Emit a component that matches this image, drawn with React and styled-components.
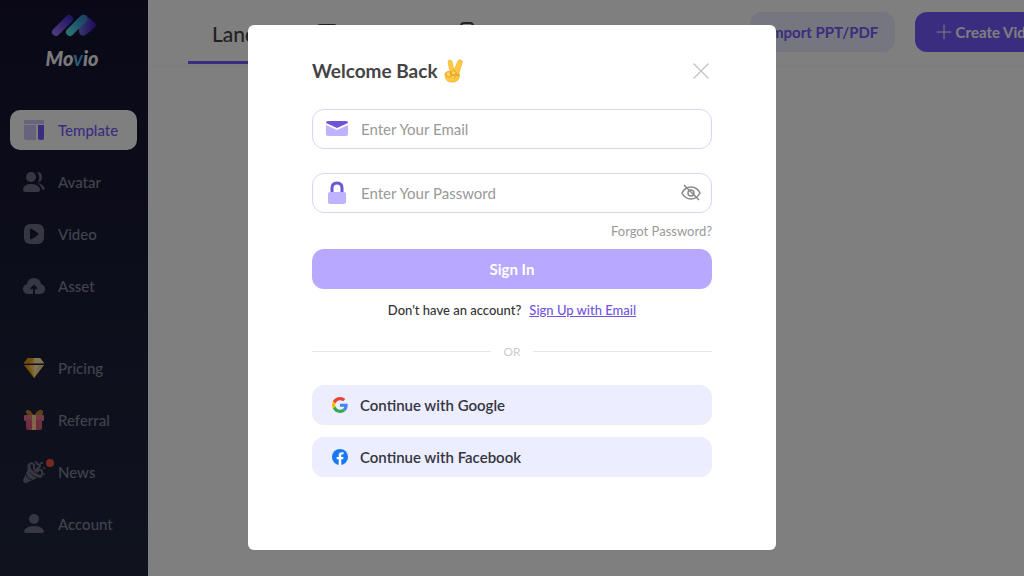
import React, { useState } from 'react';
import styled, { createGlobalStyle } from 'styled-components';

const GlobalStyle = createGlobalStyle`
  * {
    box-sizing: border-box;
  }
  body {
    margin: 0;
    overflow: hidden;
    background: #fff;
    font-family: Lato, 'Open Sans', 'Liberation Sans', sans-serif;
  }
  button, input {
    font-family: inherit;
  }
`;

const Page = styled.div`
  display: flex;
  min-width: 1063px;
  min-height: 100vh;
`;

const Sidebar = styled.aside`
  flex: 0 0 148px;
  padding: 12px 10px 0;
  background: linear-gradient(#14112e, #20283e);
`;

const Logo = styled.div`
  display: flex;
  flex-direction: column;
  align-items: center;
  height: 98px;
`;

const LogoText = styled.span`
  margin-top: 8px;
  padding-right: 4px;
  color: #f4f4f8;
  font-size: 20px;
  line-height: 24px;
  font-weight: 900;
  font-style: italic;
  i {
    color: transparent;
    background: linear-gradient(to top right, #55ddec, #3b7fd0);
    background-clip: text;
  }
`;

const Menu = styled.nav`
  display: flex;
  flex-direction: column;
  gap: 12px;
  margin-bottom: 42px;
`;

const MenuItem = styled.a`
  display: flex;
  align-items: center;
  gap: 12px;
  width: 127px;
  height: 40px;
  padding-left: 12px;
  border-radius: 10px;
  color: ${(props) => (props.$active ? '#7559ff' : '#84859a')};
  background: ${(props) => (props.$active ? '#fff' : 'transparent')};
  font-size: 15px;
  font-weight: 500;
  text-decoration: none;
`;

const IconBox = styled.span`
  position: relative;
  display: flex;
  width: 24px;
  height: 24px;
`;

const Dot = styled.span`
  position: absolute;
  top: -1px;
  right: -8px;
  width: 8px;
  height: 8px;
  border-radius: 50%;
  background: #f0503f;
`;

const Main = styled.main`
  flex: 1;
  min-width: 0;
`;

const Header = styled.header`
  display: flex;
  align-items: flex-start;
  height: 67px;
  padding: 12px 0 0 40px;
  border-bottom: 1px solid #f6f6f8;
`;

const Tabs = styled.div`
  display: flex;
  flex: 1;
`;

const Tab = styled.button`
  display: flex;
  align-items: center;
  gap: 8px;
  height: 52px;
  padding: 0 20px 7px 24px;
  border: 0;
  border-bottom: 3px solid ${(props) => (props.$active ? '#7559ff' : 'transparent')};
  background: none;
  color: #444;
  font-size: 21px;
  font-weight: 500;
`;

const HeaderButton = styled.button`
  display: flex;
  flex-shrink: 0;
  align-items: center;
  justify-content: center;
  gap: 4px;
  width: ${(props) => (props.$primary ? '148px' : '145px')};
  height: 40px;
  margin-left: 20px;
  border: 0;
  border-radius: 12px;
  color: ${(props) => (props.$primary ? '#fff' : '#7559ff')};
  background: ${(props) => (props.$primary ? '#7559ff' : '#ecedff')};
  font-size: 15px;
  font-weight: 700;
  white-space: nowrap;
`;

const Overlay = styled.div`
  position: fixed;
  inset: 0;
  display: flex;
  align-items: center;
  justify-content: center;
  padding-bottom: 2px;
  background: rgba(0, 0, 0, 0.5);
`;

const Modal = styled.section`
  width: 528px;
  max-width: 100%;
  min-height: 525px;
  padding: 32px 64px;
  border-radius: 6px;
  background: #fff;
`;

const ModalHeader = styled.div`
  display: flex;
  align-items: center;
  justify-content: space-between;
  height: 28px;
  margin-bottom: 24px;
`;

const Title = styled.h1`
  display: flex;
  align-items: center;
  gap: 6px;
  margin: 0;
  color: #444;
  font-size: 19px;
  font-weight: 700;
`;

const IconButton = styled.button`
  display: flex;
  padding: 0;
  border: 0;
  background: none;
  color: ${(props) => props.$color};
`;

const Field = styled.label`
  display: flex;
  align-items: center;
  gap: 12px;
  height: 40px;
  margin-bottom: ${(props) => (props.$last ? '10px' : '24px')};
  padding: 0 10px 0 12px;
  border: 1px solid #dad5f5;
  border-radius: 12px;
`;

const Input = styled.input`
  flex: 1;
  min-width: 0;
  padding: 0;
  border: 0;
  outline: 0;
  color: #444;
  font-size: 15px;
  &::placeholder {
    color: #999;
  }
`;

const Forgot = styled.a`
  display: block;
  margin-bottom: 10px;
  color: #999;
  font-size: 13px;
  line-height: 16px;
  text-align: right;
  text-decoration: none;
`;

const SignIn = styled.button`
  width: 100%;
  height: 40px;
  border: 0;
  border-radius: 12px;
  color: #fff;
  background: #b8a9ff;
  font-size: 15px;
  font-weight: 700;
`;

const SignUp = styled.p`
  display: flex;
  justify-content: center;
  gap: 8px;
  margin: 12px 0 24px;
  color: #333;
  font-size: 13px;
  font-weight: 500;
  line-height: 18px;
  a {
    color: #7354e0;
  }
`;

const Divider = styled.div`
  display: flex;
  align-items: center;
  gap: 12px;
  margin-bottom: 24px;
  color: #ccc;
  font-size: 12px;
  line-height: 18px;
  &::before,
  &::after {
    content: '';
    flex: 1;
    height: 1px;
    background: #e8e8e8;
  }
`;

const Social = styled.button`
  display: flex;
  align-items: center;
  gap: 12px;
  width: 100%;
  height: 40px;
  margin-bottom: 12px;
  padding: 0 20px;
  border: 0;
  border-radius: 12px;
  color: #333640;
  background: #ecedff;
  font-size: 15px;
  font-weight: 600;
`;

const LogoMark = () => (
  <svg width="46" height="26" viewBox="0 0 46 26">
    <defs>
      <linearGradient id="left" x1="4" y1="20" x2="18" y2="6" gradientUnits="userSpaceOnUse">
        <stop offset="0" stopColor="#9a6ff0" />
        <stop offset="1" stopColor="#4331cc" />
      </linearGradient>
      <linearGradient id="mid" x1="18" y1="20" x2="32" y2="6" gradientUnits="userSpaceOnUse">
        <stop offset="0" stopColor="#55ddec" />
        <stop offset="1" stopColor="#338fc9" />
      </linearGradient>
      <linearGradient id="right" x1="0" y1="0" x2="1" y2="0">
        <stop offset="0" stopColor="#6d73dc" />
        <stop offset="1" stopColor="#3b12b8" />
      </linearGradient>
    </defs>
    <path d="M32 3Q35 2 37 5L44 11Q46 13 44 15L36 22Q33 25 30 23 28 22 28 19V8Z" fill="url(#right)" />
    <path d="M5 20 18 7" stroke="url(#left)" strokeWidth="8" strokeLinecap="round" />
    <path d="M19 20 32 7" stroke="url(#mid)" strokeWidth="8" strokeLinecap="round" />
  </svg>
);

const TemplateIcon = () => (
  <svg width="24" height="24" viewBox="0 0 24 24">
    <path d="M2 2h20v4H2z" fill="#cfc6f8" />
    <path d="M2 7h12v15H4q-2 0-2-2z" fill="#cfc6f8" />
    <path d="M16 7h6v13q0 2-2 2h-2q-2 0-2-2z" fill="#7559ff" />
  </svg>
);

const AvatarIcon = () => (
  <svg width="24" height="24" viewBox="0 0 24 24" fill="#6c6e85">
    <circle cx="9" cy="7" r="5" />
    <path d="M1 19q1-5 8-5t9 5q0 3-2 3H3q-2 0-2-3z" />
    <path d="M15 2q5 0 5 5t-4 5q3-5-1-10zM16 13q5 1 7 6l-2 1q-2-4-5-7z" />
  </svg>
);

const VideoIcon = () => (
  <svg width="24" height="24" viewBox="0 0 24 24">
    <rect x="2" y="2" width="20" height="20" rx="6" fill="#6c6e85" />
    <path d="M8 8v8q0 2 2 1l6-4q1-1 0-2l-6-4q-2-1-2 1z" fill="#181a30" />
  </svg>
);

const AssetIcon = () => (
  <svg width="24" height="24" viewBox="0 0 24 24">
    <path d="M7 20q-6 0-6-5 0-4 4-5Q6 4 12 4t7 6q4 1 4 5 0 5-6 5z" fill="#6c6e85" />
    <path d="M12 21v-8M9 15l3-3 3 3" fill="none" stroke="#1a1d34" strokeWidth="2" />
  </svg>
);

const PricingIcon = () => (
  <svg width="24" height="24" viewBox="0 0 24 24">
    <path d="M6 2h12l4 5v1H2V7z" fill="#ffc03e" />
    <path d="M6 2 2 7h6l4-5z" fill="#e79a14" />
    <path d="M12 2h6l4 5H12z" fill="#ffe8ad" />
    <path d="M2 9h20L12 22z" fill="#eca11a" />
    <path d="M7 9h5v13z" fill="#ffcb54" />
    <path d="M12 9h5l-5 13z" fill="#ffe9b8" />
    <path d="M17 9h5L12 22z" fill="#efd490" />
    <path d="M2 8h20" stroke="#202237" strokeWidth="1" />
  </svg>
);

const ReferralIcon = () => (
  <svg width="24" height="24" viewBox="0 0 24 24">
    <path d="M12 8C2 8 3 1 6 2q3 0 6 6 3-6 6-6 3-1 3 3t-9 3" fill="#bf832c" />
    <rect x="2" y="7" width="20" height="6" rx="1" fill="#e8728c" />
    <path d="M4 12h16v8q0 2-2 2H6q-2 0-2-2z" fill="#dc5c7d" />
    <path d="M10 7h4v15h-4z" fill="#ffd093" />
  </svg>
);

const NewsIcon = () => (
  <svg width="24" height="24" viewBox="0 0 24 24" fill="none" strokeLinecap="round">
    <path d="M6 9 1 20q0 3 3 3l11-5Q9 16 6 9z" fill="#6c6e85" />
    <path d="M4 14q1 5 6 6" stroke="#1e2338" strokeWidth="1" />
    <path d="M7 5q-1 4 4 8t8 3" stroke="#6c6e85" strokeWidth="3" />
    <path d="M8 4q2-2 4 1v4M13 11l5-5M18 5l-3-1-1-2M15 12q3-4 5-1v3" stroke="#6c6e85" strokeWidth="2" />
    <path d="M19 3h1M22 8h0M22 14h0" stroke="#6c6e85" strokeWidth="2" />
  </svg>
);

const AccountIcon = () => (
  <svg width="24" height="24" viewBox="0 0 24 24" fill="#6c6e85">
    <circle cx="12" cy="7" r="5" />
    <path d="M2 19q2-5 10-5t10 5q0 2-3 2H5q-3 0-3-2z" />
  </svg>
);

const PlusIcon = () => (
  <svg width="16" height="16" viewBox="0 0 16 16" stroke="#fff" strokeLinecap="round">
    <path d="M8 1v14M1 8h14" />
  </svg>
);

const LandscapeIcon = () => (
  <svg width="20" height="20" viewBox="0 0 20 20" fill="none" stroke="#444" strokeWidth="2">
    <rect x="1" y="2" width="18" height="16" rx="2" />
  </svg>
);

const PortraitIcon = () => (
  <svg width="14" height="22" viewBox="0 0 14 22" fill="none" stroke="#444" strokeWidth="2">
    <rect x="1" y="1" width="12" height="20" rx="3" />
  </svg>
);

const VictoryHand = () => (
  <svg width="20" height="24" viewBox="0 0 20 24" strokeLinejoin="round">
    <path
      d="M6 13 4 3q0-2 2-2t2 2l2 8 4-9q1-2 3-1t1 3l-3 10q2 3-1 7-3 3-7 2-5 0-6-6-1-4 3-4z"
      fill="#ffc93f"
      stroke="#eba92a"
      strokeWidth=".6"
    />
    <path
      d="M2 15q1-4 4-2l1 3q-1 3-3 2-2 0-2-3zM7 13q3-3 5 0v2q-2 3-4 1zM7 18q4-5 8-2-5 0-5 4"
      fill="#ffd75e"
      stroke="#d98f1c"
      strokeWidth=".7"
    />
  </svg>
);

const CloseIcon = () => (
  <svg width="22" height="22" viewBox="0 0 22 22" stroke="currentColor" strokeWidth="1.4" strokeLinecap="round">
    <path d="m4 4 14 14M18 4 4 18" />
  </svg>
);

const MailIcon = () => (
  <svg width="24" height="24" viewBox="0 0 24 24">
    <path d="M1 6q0-2 2-2h18q2 0 2 2l-11 5z" fill="#6f55d3" />
    <path d="M1 8l11 5 11-5v9q0 2-2 2H3q-2 0-2-2z" fill="#c0b2ff" />
  </svg>
);

const LockIcon = () => (
  <svg width="24" height="24" viewBox="0 0 24 24">
    <path d="M7 12V7q0-5 5-5t5 5v5" fill="none" stroke="#6f55d3" strokeWidth="3" />
    <rect x="3" y="11" width="18" height="12" rx="2" fill="#c0b2ff" />
  </svg>
);

const EyeIcon = () => (
  <svg width="20" height="20" viewBox="0 0 20 20" fill="none" stroke="currentColor" strokeWidth="1.5">
    <path d="M1 10q3-6 9-6t9 6q-3 6-9 6t-9-6z" />
    <circle cx="10" cy="10" r="3" />
    <path d="m3 2 15 15" />
  </svg>
);

const GoogleIcon = () => (
  <svg width="16" height="16" viewBox="0 0 48 48">
    <path fill="#ea4335" d="M24 9.500c3.540 0 6.710 1.220 9.210 3.600l6.850-6.850C35.900 2.380 30.470 0 24 0 14.620 0 6.510 5.380 2.560 13.220l7.980 6.190C12.430 13.720 17.740 9.500 24 9.500z" />
    <path fill="#4285f4" d="M46.980 24.550c0-1.570-.15-3.090-.38-4.550H24v9.020h12.940c-.58 2.960-2.260 5.480-4.780 7.180l7.730 6c4.510-4.180 7.090-10.360 7.090-17.650z" />
    <path fill="#fbbc05" d="M10.530 28.590c-.48-1.450-.76-2.990-.76-4.590s.27-3.140.76-4.590l-7.980-6.190C.92 16.460 0 20.120 0 24c0 3.880.92 7.540 2.560 10.780l7.970-6.190z" />
    <path fill="#34a853" d="M24 48c6.480 0 11.930-2.130 15.890-5.810l-7.730-6c-2.150 1.450-4.920 2.300-8.160 2.300-6.260 0-11.570-4.220-13.470-9.910l-7.980 6.190C6.510 42.620 14.620 48 24 48z" />
  </svg>
);

const FacebookIcon = () => (
  <svg width="16" height="16" viewBox="0 0 24 24">
    <circle cx="12" cy="12" r="12" fill="#1877f2" />
    <path d="M16.700 15.500 17.200 12h-3.300V9.800c0-1 .5-1.900 2-1.900h1.500V5c-4.500-.8-7.400.4-7.400 4.400V12H7v3.500h3V24h3.900v-8.500z" fill="#fff" />
  </svg>
);

const menus = [
  [
    { name: 'Template', icon: <TemplateIcon />, active: true },
    { name: 'Avatar', icon: <AvatarIcon /> },
    { name: 'Video', icon: <VideoIcon /> },
    { name: 'Asset', icon: <AssetIcon /> },
  ],
  [
    { name: 'Pricing', icon: <PricingIcon /> },
    { name: 'Referral', icon: <ReferralIcon /> },
    { name: 'News', icon: <NewsIcon />, dot: true },
    { name: 'Account', icon: <AccountIcon /> },
  ],
];

export default () => {
  const [formData, setFormData] = useState({ email: '', password: '' });
  const [visible, setVisible] = useState(false);

  const handleChange = (e) => {
    setFormData({ ...formData, [e.target.name]: e.target.value });
  };

  return (
    <>
      <GlobalStyle />
      <Page>
        <Sidebar>
          <Logo>
            <LogoMark />
            <LogoText>
              Mo<i>v</i>io
            </LogoText>
          </Logo>
          {menus.map((menu, i) => (
            <Menu key={i}>
              {menu.map((item) => (
                <MenuItem key={item.name} href="#" $active={item.active}>
                  <IconBox>
                    {item.icon}
                    {item.dot && <Dot />}
                  </IconBox>
                  {item.name}
                </MenuItem>
              ))}
            </Menu>
          ))}
        </Sidebar>
        <Main>
          <Header>
            <Tabs>
              <Tab type="button" $active>
                Landscape
                <LandscapeIcon />
              </Tab>
              <Tab type="button">
                Portrait
                <PortraitIcon />
              </Tab>
            </Tabs>
            <HeaderButton type="button">Import PPT/PDF</HeaderButton>
            <HeaderButton type="button" $primary>
              <PlusIcon />
              Create Video
            </HeaderButton>
          </Header>
        </Main>
      </Page>
      <Overlay>
        <Modal role="dialog" aria-modal="true" aria-labelledby="title">
          <ModalHeader>
            <Title id="title">
              Welcome Back <VictoryHand />
            </Title>
            <IconButton type="button" aria-label="Close" $color="#c4c4c4">
              <CloseIcon />
            </IconButton>
          </ModalHeader>
          <form onSubmit={(e) => e.preventDefault()}>
            <Field>
              <MailIcon />
              <Input
                type="email"
                name="email"
                aria-label="Email"
                placeholder="Enter Your Email"
                value={formData.email}
                onChange={handleChange}
              />
            </Field>
            <Field $last>
              <LockIcon />
              <Input
                type={visible ? 'text' : 'password'}
                name="password"
                aria-label="Password"
                placeholder="Enter Your Password"
                value={formData.password}
                onChange={handleChange}
              />
              <IconButton
                type="button"
                aria-label="Show password"
                $color="#888"
                onClick={() => setVisible(!visible)}
              >
                <EyeIcon />
              </IconButton>
            </Field>
            <Forgot href="#">Forgot Password?</Forgot>
            <SignIn type="submit">Sign In</SignIn>
          </form>
          <SignUp>
            Don't have an account? <a href="#">Sign Up with Email</a>
          </SignUp>
          <Divider>OR</Divider>
          <Social type="button">
            <GoogleIcon />
            Continue with Google
          </Social>
          <Social type="button">
            <FacebookIcon />
            Continue with Facebook
          </Social>
        </Modal>
      </Overlay>
    </>
  );
};
